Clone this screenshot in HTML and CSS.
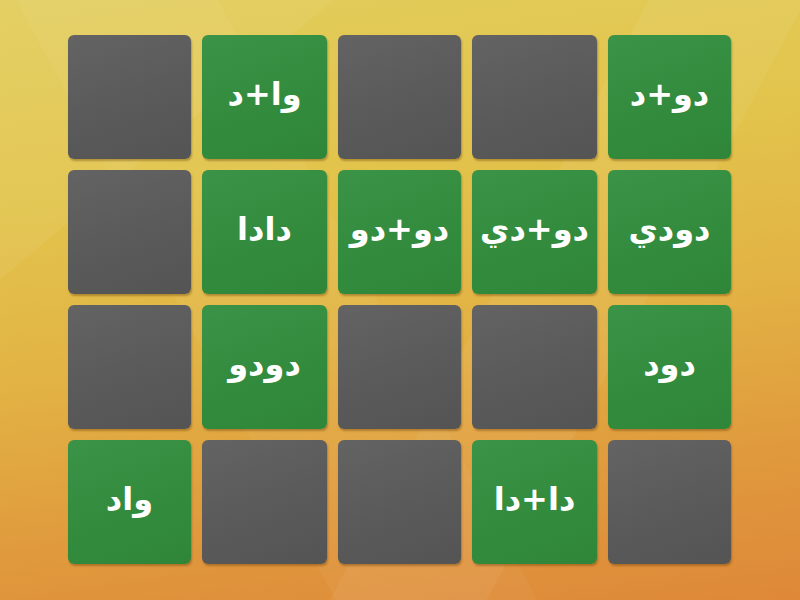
FILE: index.html
```html
<!DOCTYPE html>
<html lang="ar">
<head>
<meta charset="utf-8">
<title>Memory</title>
<link rel="stylesheet" href="styles.css">
</head>
<body>
<main class="board">
  <div class="card back"></div>
  <div class="card face"><span dir="rtl">وا+د</span></div>
  <div class="card back"></div>
  <div class="card back"></div>
  <div class="card face"><span dir="rtl">دو+د</span></div>

  <div class="card back"></div>
  <div class="card face"><span dir="rtl">دادا</span></div>
  <div class="card face"><span dir="rtl">دو+دو</span></div>
  <div class="card face"><span dir="rtl">دو+دي</span></div>
  <div class="card face"><span dir="rtl">دودي</span></div>

  <div class="card back"></div>
  <div class="card face"><span dir="rtl">دودو</span></div>
  <div class="card back"></div>
  <div class="card back"></div>
  <div class="card face"><span dir="rtl">دود</span></div>

  <div class="card face"><span dir="rtl">واد</span></div>
  <div class="card back"></div>
  <div class="card back"></div>
  <div class="card face"><span dir="rtl">دا+دا</span></div>
  <div class="card back"></div>
</main>
</body>
</html>
```
FILE: styles.css
```css
html, body {
  margin: 0;
  padding: 0;
  width: 800px;
  height: 600px;
  overflow: hidden;
}
body {
  font-family: "DejaVu Sans", "Noto Sans", sans-serif;
  background:
    linear-gradient(118deg, rgba(255,255,255,0) 0%, rgba(255,255,255,0) 58%, rgba(255,255,255,0.05) 58%, rgba(255,255,255,0.05) 72%, rgba(255,255,255,0) 72%),
    linear-gradient(62deg, rgba(0,0,0,0) 0%, rgba(0,0,0,0) 30%, rgba(255,255,255,0.04) 30%, rgba(255,255,255,0.04) 48%, rgba(0,0,0,0) 48%),
    linear-gradient(140deg, rgba(255,255,255,0.05) 0%, rgba(255,255,255,0.05) 22%, rgba(0,0,0,0) 22%),
    linear-gradient(172deg, #e2cd5c 0%, #e2c44c 30%, #e2b244 55%, #e09a3d 78%, #de8838 100%);
}
.board {
  display: grid;
  grid-template-columns: 123px 125px 123px 125px 123px;
  grid-auto-rows: 124px;
  gap: 11px;
  padding: 35px 68px;
}
.card {
  border-radius: 6px;
  display: flex;
  align-items: center;
  justify-content: center;
  box-shadow: 1px 2px 2px rgba(90, 50, 0, 0.35);
}
.back {
  background: linear-gradient(160deg, #636363 0%, #5a5a5a 55%, #545454 100%);
}
.face {
  background: linear-gradient(160deg, #3a9346 0%, #338c3e 55%, #2f8639 100%);
  color: #ffffff;
  font-weight: bold;
  font-size: 32px;
  line-height: 1;
}
.face span {
  display: block;
  padding-bottom: 6px;
}
```
